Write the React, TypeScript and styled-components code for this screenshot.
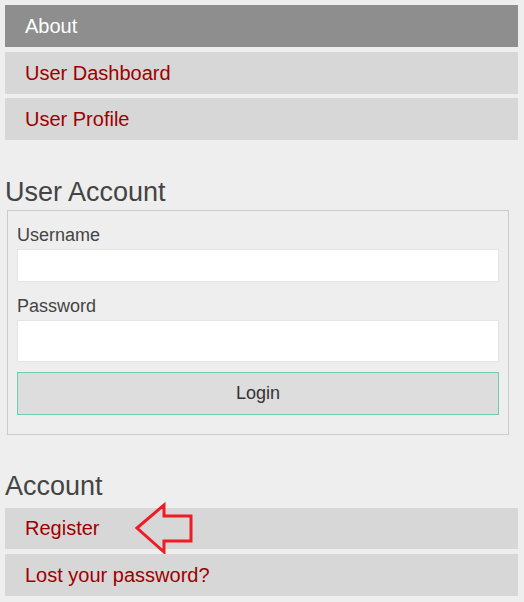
import React from 'react';
import styled, { createGlobalStyle } from 'styled-components';

const GlobalStyle = createGlobalStyle`
  body {
    margin: 0;
    background-color: #eeeeee;
    font-family: "Liberation Sans", Arial, sans-serif;
  }
`;

const colors = {
  page: '#eeeeee',
  navItem: '#d7d7d7',
  navActive: '#8e8e8e',
  link: '#9e0000',
  text: '#444444',
  border: '#cccccc',
  inputBorder: '#e4e4e4',
  accent: '#6dcdb0',
  arrow: '#ee1c25',
};

const Page = styled.div`
  padding: 5px 6px 5px 5px;
  background-color: ${colors.page};
  min-height: 592px;
`;

const Menu = styled.nav`
  display: flex;
  flex-direction: column;
  gap: 5px;
`;

const MenuItem = styled.a<{ $active?: boolean; $height?: number }>`
  position: relative;
  display: block;
  height: ${(p) => p.$height ?? 42}px;
  line-height: ${(p) => p.$height ?? 42}px;
  padding-left: 20px;
  font-size: 20px;
  text-decoration: none;
  background-color: ${(p) => (p.$active ? colors.navActive : colors.navItem)};
  color: ${(p) => (p.$active ? '#ffffff' : colors.link)};
`;

const Heading = styled.h2<{ $top: number; $bottom: number }>`
  margin: ${(p) => p.$top}px 0 ${(p) => p.$bottom}px;
  font-size: 27px;
  line-height: 32px;
  font-weight: 400;
  color: ${colors.text};
`;

const LoginBox = styled.form`
  margin: 0 9px 0 2px;
  padding: 13px 9px 19px;
  border: 1px solid ${colors.border};
  display: flex;
  flex-direction: column;
`;

const Label = styled.label<{ $top?: number }>`
  display: block;
  margin-top: ${(p) => p.$top ?? 0}px;
  margin-bottom: 3px;
  font-size: 18px;
  line-height: 22px;
  color: ${colors.text};
`;

const Input = styled.input<{ $height: number }>`
  box-sizing: border-box;
  width: 100%;
  height: ${(p) => p.$height}px;
  margin: 0;
  border: 1px solid ${colors.inputBorder};
  background-color: #ffffff;
  outline: none;
`;

const Button = styled.button`
  appearance: none;
  box-sizing: border-box;
  width: 100%;
  height: 43px;
  margin-top: 10px;
  border: 1px solid ${colors.accent};
  border-radius: 0;
  background-color: #dddddd;
  font-family: "Liberation Sans", Arial, sans-serif;
  font-size: 18px;
  color: #333333;
  cursor: pointer;
`;

const Arrow = styled.svg`
  position: absolute;
  left: 127px;
  top: -6px;
  width: 66px;
  height: 54px;
  overflow: visible;
`;

export default function App() {
  return (
    <Page>
      <GlobalStyle />
      <Menu>
        <MenuItem href="#" $active>About</MenuItem>
        <MenuItem href="#">User Dashboard</MenuItem>
        <MenuItem href="#" style={{ marginTop: -1 }}>User Profile</MenuItem>
      </Menu>

      <Heading $top={36} $bottom={2}>User Account</Heading>
      <LoginBox onSubmit={(e) => e.preventDefault()}>
        <Label htmlFor="username">Username</Label>
        <Input id="username" type="text" $height={33} />
        <Label htmlFor="password" $top={13}>Password</Label>
        <Input id="password" type="password" $height={42} />
        <Button type="submit">Login</Button>
      </LoginBox>

      <Heading $top={35} $bottom={6}>Account</Heading>
      <Menu>
        <MenuItem href="#" $height={41}>
          Register
          <Arrow viewBox="0 0 66 54">
            <polygon
              points="5,26 32,3 32,14 59,14 59,39 32,39 32,50"
              fill="none"
              stroke={colors.arrow}
              strokeWidth="3"
              strokeLinejoin="miter"
            />
          </Arrow>
        </MenuItem>
        <MenuItem href="#">Lost your password?</MenuItem>
      </Menu>
    </Page>
  );
}
